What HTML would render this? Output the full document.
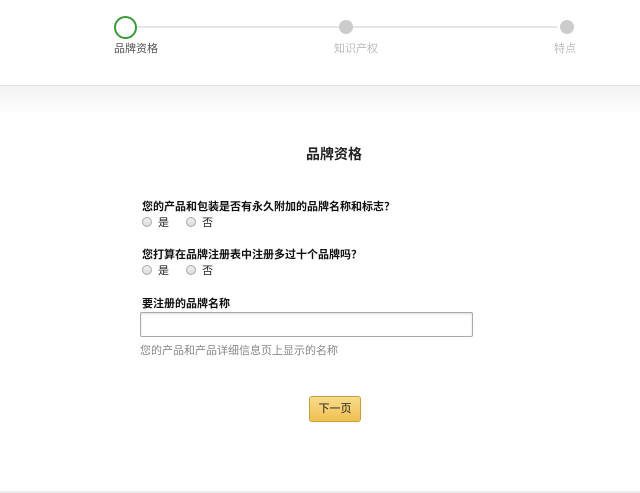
<!DOCTYPE html>
<html><head><meta charset="utf-8"><style>
*{margin:0;padding:0;box-sizing:border-box}
body{width:640px;height:493px;background:#fff;font-family:"Liberation Sans","Noto Sans CJK SC",sans-serif;position:relative;overflow:hidden;color:#111}
.a{position:absolute;white-space:nowrap}
.hdr{position:absolute;left:0;top:0;width:640px;height:86px;border-bottom:1px solid #e4e4e4;background:#fff}
.grad{position:absolute;left:0;top:86px;width:640px;height:30px;background:linear-gradient(#f3f3f3,#fff)}
.line{position:absolute;top:26px;height:2px;background:#e6e6e6}
.dot{position:absolute;width:14px;height:14px;border-radius:50%;background:#ccc;top:20px}
.q{font-size:11px;font-weight:bold;color:#111}
.r{font-size:11px;color:#222}
.rb{display:inline-block;width:10px;height:10px;border-radius:50%;border:1px solid #aaa;background:linear-gradient(#eee,#ddd);vertical-align:-1px;margin-right:6px}
.q2{font-family:"Noto Sans CJK SC",sans-serif}
</style></head><body>
<div class="hdr"></div>
<div class="grad"></div>
<div class="line" style="left:137px;width:420px"></div>
<div class="a" style="left:114px;top:16px;width:23px;height:23px;border-radius:50%;border:2px solid #3a9a3a;background:#fff"></div>
<div class="dot" style="left:339px"></div>
<div class="dot" style="left:560px"></div>
<div class="a" style="left:114px;top:40px;font-size:11px;color:#555">品牌资格</div>
<div class="a" style="left:334px;top:40px;font-size:11px;color:#bbb">知识产权</div>
<div class="a" style="left:554px;top:40px;font-size:11px;color:#bbb">特点</div>
<div class="a" style="left:306px;top:144px;font-size:14px;font-weight:bold;color:#222">品牌资格</div>
<div class="a q" style="left:142px;top:198px">您的产品和包装是否有永久附加的品牌名称和标志<span class="q2">？</span></div>
<div class="a r" style="left:142px;top:214px"><span class="rb"></span>是<span style="display:inline-block;width:17px"></span><span class="rb"></span>否</div>
<div class="a q" style="left:142px;top:246px">您打算在品牌注册表中注册多过十个品牌吗<span class="q2">？</span></div>
<div class="a r" style="left:142px;top:262px"><span class="rb"></span>是<span style="display:inline-block;width:17px"></span><span class="rb"></span>否</div>
<div class="a q" style="left:142px;top:295px">要注册的品牌名称</div>
<div class="a" style="left:140px;top:312px;width:333px;height:25px;border:1px solid #aaa;border-radius:2px;box-shadow:inset 0 1px 2px #ddd"></div>
<div class="a" style="left:140px;top:342px;font-size:11px;color:#888">您的产品和产品详细信息页上显示的名称</div>
<div class="a" style="left:309px;top:396px;width:52px;height:26px;border:1px solid #c8a040;border-radius:3px;background:linear-gradient(#f8dc8c,#f0c050);font-size:11px;color:#222;text-align:center;line-height:24px">下一页</div>
<div class="a" style="left:0;top:491px;width:640px;height:2px;background:#eee"></div>
</body></html>
